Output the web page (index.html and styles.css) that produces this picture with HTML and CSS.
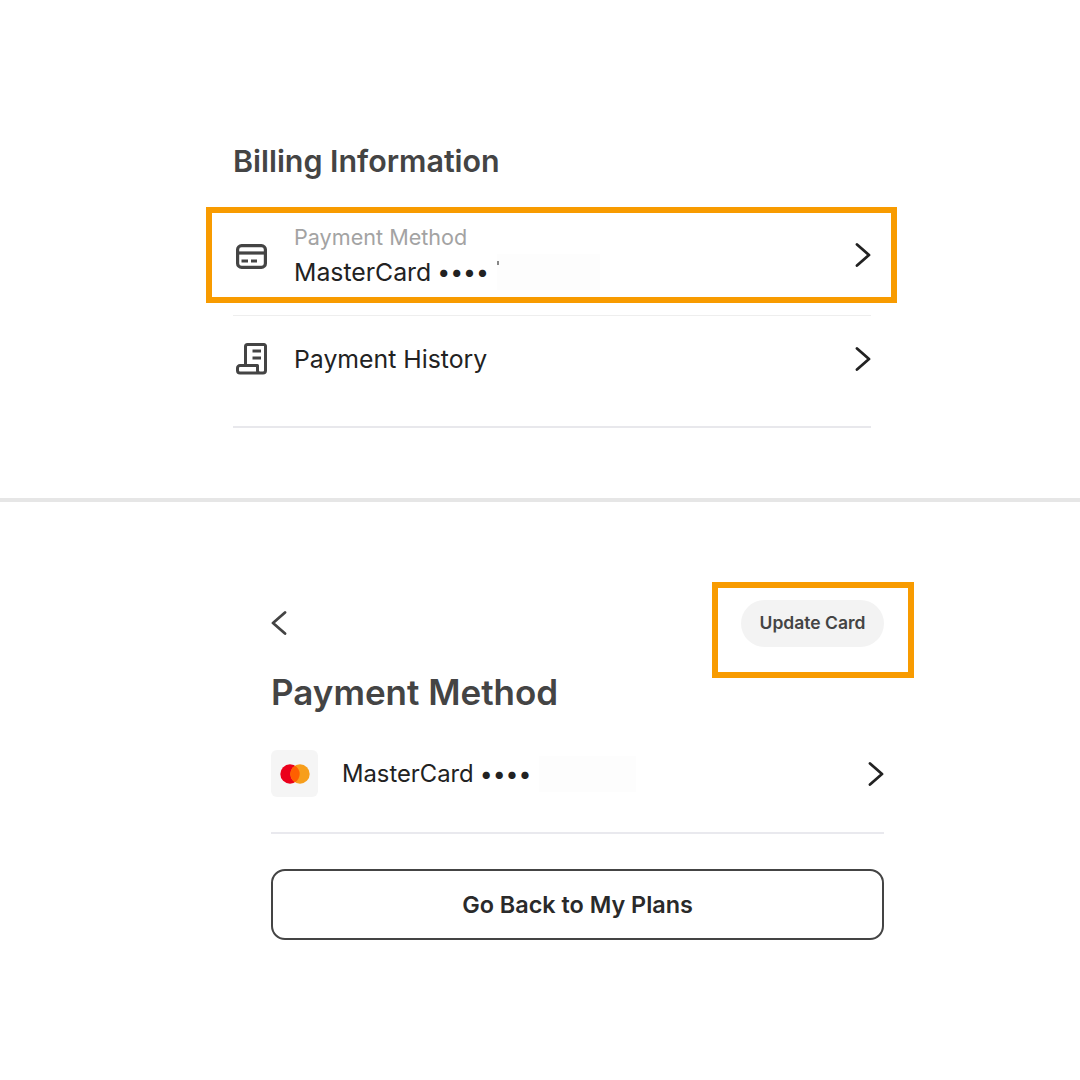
FILE: index.html
```html
<!DOCTYPE html>
<html lang="en">
<head>
  <meta charset="UTF-8">
  <title>Billing Information</title>
  <link rel="stylesheet" href="styles.css">
</head>
<body>
  <section class="billing">
    <h2 class="billing-title">Billing Information</h2>

    <div class="billing-row billing-row-first">
      <span class="highlight"></span>
      <svg class="row-icon card-icon" width="31" height="25" viewBox="0 0 31 25" fill="none" stroke="#444" stroke-width="3.2">
        <rect x="1.600" y="1.600" width="27.800" height="21.800" rx="4"/>
        <path d="M2 9H29"/>
        <path d="M5.500 17H12M15 17H21" stroke-width="3"/>
      </svg>
      <div class="row-text">
        <div class="row-label">Payment Method</div>
        <div class="row-value">MasterCard <span class="dots">••••</span> <span class="redacted redacted-top"></span></div>
      </div>
      <svg class="chevron" width="16" height="24" viewBox="0 0 16 24" fill="none" stroke="#222" stroke-width="2.800" stroke-linecap="round" stroke-linejoin="round"><path d="M2 1.500L14 12L2 22.500"/></svg>
    </div>

    <div class="billing-row billing-row-second">
      <svg class="row-icon" width="31" height="32" viewBox="0 0 31 32" fill="none" stroke="#444" stroke-width="3" stroke-linejoin="round">
        <path d="M9.500 22V3.500a2 2 0 0 1 2-2H28a1.500 1.500 0 0 1 1.500 1.500V27.500a2.500 2.500 0 0 1-2.500 2.500H4A2.500 2.500 0 0 1 1.500 27.500V25A2.500 2.500 0 0 1 4 22.500H21.500V27.500a2.500 2.500 0 0 0 2.500 2.500"/>
        <path d="M16.500 8H25M16.500 15H25"/>
      </svg>
      <div class="row-value">Payment History</div>
      <svg class="chevron" width="16" height="24" viewBox="0 0 16 24" fill="none" stroke="#222" stroke-width="2.800" stroke-linecap="round" stroke-linejoin="round"><path d="M2 1.500L14 12L2 22.500"/></svg>
    </div>
  </section>

  <section class="method">
    <div class="method-top">
      <svg class="back" width="16" height="24" viewBox="0 0 16 24" fill="none" stroke="#444" stroke-width="2.800" stroke-linecap="round" stroke-linejoin="round"><path d="M14 1.500L2 12L14 22.500"/></svg>
      <button class="update-btn"><span class="highlight"></span>Update Card</button>
    </div>
    <h2 class="method-title">Payment Method</h2>

    <div class="card-row">
      <div class="card-tile">
        <svg width="30" height="20" viewBox="0 0 30 20">
          <circle cx="10" cy="10" r="9.700" fill="#eb001b"/>
          <circle cx="20" cy="10" r="9.700" fill="#f79e1b"/>
          <path d="M15 1.700a9.700 9.700 0 0 1 0 16.600a9.700 9.700 0 0 1 0-16.600z" fill="#ff5f00"/>
        </svg>
      </div>
      <div class="row-value row-value-small">MasterCard <span class="dots">••••</span> <span class="redacted redacted-bottom"></span></div>
      <svg class="chevron" width="16" height="24" viewBox="0 0 16 24" fill="none" stroke="#222" stroke-width="2.800" stroke-linecap="round" stroke-linejoin="round"><path d="M2 1.500L14 12L2 22.500"/></svg>
    </div>

    <button class="plans-btn">Go Back to My Plans</button>
  </section>
</body>
</html>
```

FILE: styles.css
```css
* { box-sizing: border-box; }
body { margin: 0; background: #fff; font-family: Inter, "Liberation Sans", sans-serif; color: #222; }

.billing { height: 502px; padding: 143px 209px 0 233px; border-bottom: 4px solid #e6e6e6; }
.billing-title { margin: 0 0 28px; font-size: 30.400px; line-height: 36px; font-weight: 600; color: #444; }
.billing-row { position: relative; display: flex; align-items: center; }
.billing-row-first { height: 96px; }
.billing-row-second { height: 113px; margin-top: 12px; padding-bottom: 24px; border-top: 1px solid #eee; border-bottom: 2px solid #e8e8ec; }
.highlight { position: absolute; top: 0; bottom: 0; left: -27px; right: -26px; border: 6px solid #f89b00; pointer-events: none; }
.row-icon { flex: none; margin: 0 27px 0 3px; }
.card-icon { margin-top: 3px; }
.row-text { display: flex; flex-direction: column; gap: 7px; }
.row-label { font-size: 21.600px; line-height: 26px; color: #a3a3a3; }
.row-value { display: flex; align-items: center; gap: 6px; font-size: 24.800px; line-height: 30px; font-weight: 400; color: #222; }
.row-value-small { font-size: 23.800px; }
.dots { font-size: 23px; }
.chevron { flex: none; margin-left: auto; }
.redacted { position: relative; display: block; height: 36px; margin: -3px 0 -3px 2px; background: #fdfdfd; }
.redacted-top { width: 103px; }
.redacted-top::before { content: ""; position: absolute; left: 0; top: 7px; width: 2px; height: 4px; background: #888; }
.redacted-bottom { width: 97px; }

.method { padding: 80px 196px 0 271px; }
.method-top { display: flex; align-items: center; justify-content: space-between; height: 47px; margin-top: 18px; }
.back { margin-bottom: 2px; }
.update-btn { position: relative; width: 143px; height: 47px; padding: 0 0 2px; border: 0; border-radius: 24px; background: #f3f3f3; font: 600 17.500px Inter, "Liberation Sans", sans-serif; color: #444; }
.update-btn .highlight { top: -18px; bottom: -31px; left: -29px; right: -30px; }
.method-title { margin: 24px 0 0; font-size: 35px; line-height: 42px; font-weight: 600; color: #444; }
.card-row { display: flex; align-items: center; gap: 24px; height: 84px; margin-top: 37px; padding-bottom: 35px; border-bottom: 2px solid #e9e9ee; }
.card-row .row-value { flex: none; }
.card-tile { display: flex; align-items: center; justify-content: center; width: 47px; height: 47px; border-radius: 6px; background: #f5f5f5; flex: none; }
.plans-btn { display: block; width: 100%; height: 71px; margin-top: 35px; border: 2px solid #444; border-radius: 14px; background: #fff; font: 600 23.400px Inter, "Liberation Sans", sans-serif; color: #2a2a2a; }
```
